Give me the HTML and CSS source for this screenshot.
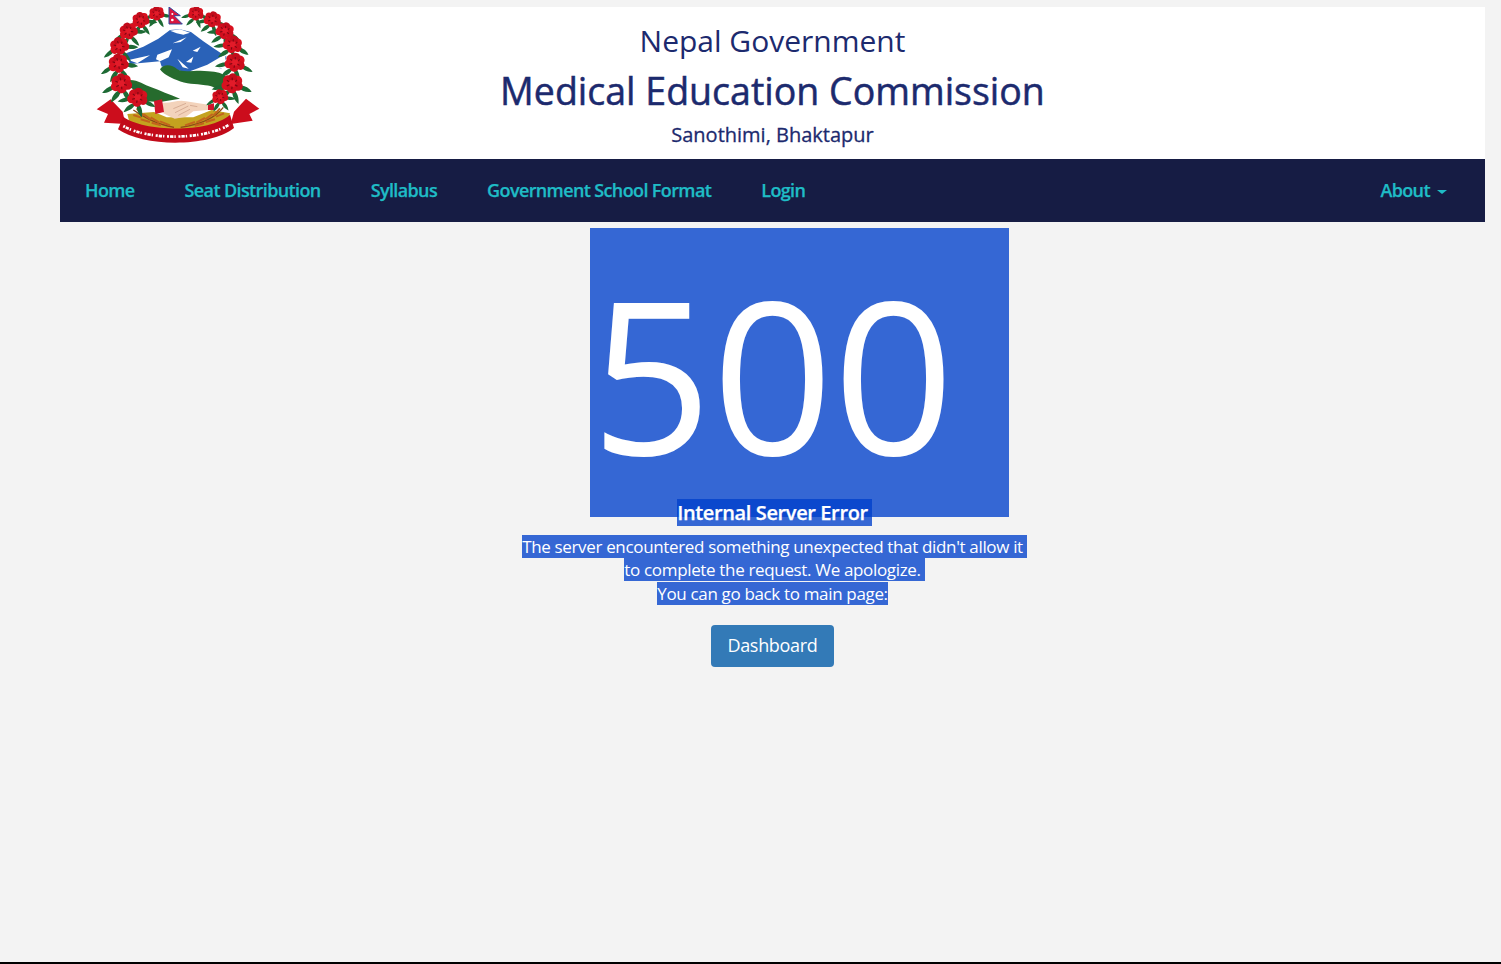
FILE: index.html
```html
<!DOCTYPE html>
<html lang="en">
<head>
<meta charset="utf-8">
<title>500 - Medical Education Commission</title>
<link rel="stylesheet" href="styles.css">
</head>
<body>
<div class="page">
  <header class="masthead">
    <svg class="emblem" viewBox="48 21 510 429" aria-label="Emblem of Nepal" role="img">
      <defs>
        <g id="bloom">
          <path d="M-8 20 C-26 26 -32 40 -36 54 C-20 48 -8 38 -4 24 Z M8 20 C20 30 24 44 24 60 C12 52 2 38 2 24 Z M-24 4 C-40 6 -52 14 -60 24 C-44 26 -30 20 -22 12 Z M24 4 C40 4 52 10 60 20 C44 24 30 20 22 12 Z" fill="#1d6a34"/>
          <circle cx="-14" cy="-8" r="15" fill="#d10f1e"/>
          <circle cx="14" cy="-9" r="15" fill="#d8111f"/>
          <circle cx="0" cy="-17" r="13" fill="#c20c1b"/>
          <circle cx="-18" cy="8" r="14" fill="#d8111f"/>
          <circle cx="18" cy="7" r="14" fill="#cc0e1d"/>
          <circle cx="0" cy="15" r="15" fill="#d10f1e"/>
          <circle cx="0" cy="0" r="11" fill="#e21b29"/>
          <path d="M-17 -8 l7 4 M13 -12 l-4 7 M-16 9 l8 -4 M16 7 l-8 -3 M0 18 l0 -8 M-2 -17 l1 8" stroke="#7c0712" stroke-width="3.5" fill="none"/>
        </g>
      </defs>
      <path d="M138 160 L190 140 L235 116 L270 90 L300 88 L333 96 L370 124 L405 148 L440 170 L425 205 L340 222 L250 200 L150 192 Z" fill="#2a62b8"/>
      <path d="M270 92 L300 88 L330 98 L310 104 L290 100 Z M232 164 L276 148 L266 172 L240 184 L228 178 Z M338 152 L362 140 L352 156 Z M278 130 L320 112 L302 126 Z M318 186 L340 170 L334 188 Z M292 176 L326 206 L308 202 Z M146 180 L210 166 L172 190 Z M330 214 L382 194 L437 162 L434 200 L400 214 L360 222 Z" fill="#fff"/>
      <path d="M150 192 L240 184 L246 204 L252 240 L170 240 Z" fill="#fff"/>
      <path d="M240 208 C250 192 274 192 292 208 C312 220 350 208 385 214 C410 216 428 218 438 232 L430 278 C410 268 398 256 376 256 C345 250 320 254 290 240 C268 232 250 222 240 208 Z" fill="#266b2d"/>
      <path d="M146 240 C172 238 192 254 214 262 C240 272 268 284 300 296 L240 306 L200 304 C184 294 168 280 158 268 Z" fill="#266b2d"/>
      <path d="M142 342 L222 336 L260 352 L340 352 L395 330 L450 340 L442 374 L345 400 L250 400 L150 374 Z" fill="#c4a21f"/>
      <path d="M160 330 C190 350 225 372 282 382 M430 322 C410 348 370 372 302 382" stroke="#8a4a17" stroke-width="4" fill="none"/>
      <path d="M170 325 l20 22 M190 342 l22 16 M212 352 l26 16 M240 364 l30 12 M160 345 l24 8 M182 358 l28 8 M215 368 l28 8 M420 325 l-20 22 M398 342 l-22 16 M375 354 l-26 14 M345 366 l-30 10 M432 340 l-24 10 M405 358 l-28 8 M372 370 l-28 7" stroke="#c2641c" stroke-width="6" fill="none"/>
      <path d="M248 308 C275 310 295 298 318 304 L385 314 L384 330 L340 334 L318 350 L284 356 L262 346 L250 340 Z" fill="#f3d3bb"/>
      <path d="M280 326 L318 310 M285 338 L325 318 M295 346 L330 328 M330 316 L352 320" stroke="#c99a82" stroke-width="2" fill="none"/>
      <path d="M222 303 L246 298 L252 336 L226 342 Z" fill="#d0142a"/>
      <path d="M384 314 L402 310 L402 330 L384 330 Z" fill="#d0142a"/>
      <path d="M92 298 L128 335 L136 372 L72 368 L84 342 L50 328 Z M498 296 L462 335 L452 372 L518 362 L508 342 L538 326 Z" fill="#cc0d1c"/>
      <path d="M130 350 C190 396 390 400 450 344 L462 384 C390 442 190 442 114 388 Z" fill="#c20b1a"/>
      <path class="motto" d="M130 378 C200 420 370 422 448 374"/>
      <use href="#bloom" transform="translate(230 40) rotate(-5) scale(.72)"/>
      <use href="#bloom" transform="translate(182 60) rotate(-10) scale(.8)"/>
      <use href="#bloom" transform="translate(145 93) rotate(-15) scale(.85)"/>
      <use href="#bloom" transform="translate(118 138) rotate(-15) scale(.9)"/>
      <use href="#bloom" transform="translate(115 190) rotate(-10) scale(.95)"/>
      <use href="#bloom" transform="translate(124 250) rotate(-5) scale(1)"/>
      <use href="#bloom" transform="translate(173 292) rotate(10) scale(.95)"/>
      <use href="#bloom" transform="translate(348 40) rotate(5) scale(.72)"/>
      <use href="#bloom" transform="translate(398 58) rotate(10) scale(.8)"/>
      <use href="#bloom" transform="translate(435 92) rotate(15) scale(.85)"/>
      <use href="#bloom" transform="translate(458 133) rotate(15) scale(.9)"/>
      <use href="#bloom" transform="translate(465 187) rotate(10) scale(.95)"/>
      <use href="#bloom" transform="translate(457 250) rotate(5) scale(1)"/>
      <use href="#bloom" transform="translate(420 290) rotate(-10) scale(.75)"/>
      <path d="M267 21 L301 47 L282 47 L307 72 L267 72 Z" fill="#d8163f" stroke="#2b4aa0" stroke-width="3"/>
      <circle cx="277" cy="42" r="3" fill="#fff"/>
      <circle cx="277" cy="60" r="4" fill="#fff"/>
    </svg>
    <div class="titles">
      <div class="title-gov">Nepal Government</div>
      <div class="title-org">Medical Education Commission</div>
      <div class="title-loc">Sanothimi, Bhaktapur</div>
    </div>
  </header>
  <nav class="navbar">
    <ul class="nav-list">
      <li><a class="nav-link" href="#">Home</a></li>
      <li><a class="nav-link" href="#">Seat Distribution</a></li>
      <li><a class="nav-link" href="#">Syllabus</a></li>
      <li><a class="nav-link" href="#">Government School Format</a></li>
      <li><a class="nav-link" href="#">Login</a></li>
    </ul>
    <a class="nav-link nav-about" href="#">About <span class="caret"></span></a>
  </nav>
  <main class="error">
    <h1 class="error-code"><span class="hl hl-code">500</span></h1>
    <h3 class="error-title"><span class="hl hl-title">Internal Server Error</span></h3>
    <p class="error-text"><span class="hl hl-trail">The server encountered something unexpected that didn't allow it</span><br><span class="hl hl-trail">to complete the request. We apologize.</span><br><span class="hl">You can go back to main page:</span></p>
    <a class="btn" href="#">Dashboard</a>
  </main>
</div>
</body>
</html>
```
FILE: styles.css
```css
* { box-sizing: border-box; }
html, body { height: 100%; }
body {
  margin: 0;
  background: #f3f3f3;
  font-family: "Open Sans", "Noto Sans", sans-serif;
  color: #fff;
  border-bottom: 2px solid #000;
  overflow: hidden;
}
.page {
  margin-left: 60px;
  width: 1425px;
  padding-top: 7px;
}
.masthead {
  display: grid;
  grid-template-columns: 1fr auto 1fr;
  height: 152px;
  background: #fff;
  padding-left: 36px;
}
.emblem { width: 170px; height: 143px; display: block; }
.motto { fill: none; stroke: #fff; stroke-width: 8; stroke-dasharray: 6 3 10 3 4 8; }
.titles {
  grid-column: 2;
  margin-left: -36px;
  text-align: center;
  color: #1c2a6e;
}
.title-gov { font-size: 30px; line-height: 40px; margin-top: 14px; }
.title-org {
  font-size: 37.5px;
  line-height: 50px;
  margin-top: 5px;
  -webkit-text-stroke: 0.5px #1c2a6e;
}
.title-loc {
  font-size: 20px;
  line-height: 28px;
  margin-top: 5px;
  -webkit-text-stroke: 0.3px #1c2a6e;
}
.navbar {
  display: flex;
  justify-content: space-between;
  height: 63px;
  background: #161c44;
}
.nav-list { display: flex; list-style: none; margin: 0; padding: 0; }
.nav-link {
  display: block;
  padding: 0 25px;
  font-size: 18px;
  font-weight: 600;
  line-height: 63px;
  color: #1fbcc6;
  text-decoration: none;
  letter-spacing: -0.62px;
  -webkit-text-stroke: 0.25px #1fbcc6;
}
.nav-about { padding-right: 38px; }
.caret {
  display: inline-block;
  width: 0;
  height: 0;
  margin-left: 3px;
  vertical-align: middle;
  border-top: 4px solid #1fbcc6;
  border-left: 5px solid transparent;
  border-right: 5px solid transparent;
}
.error { text-align: center; }
.error-code {
  margin: 34px 0 0;
  font-size: 212px;
  font-weight: 400;
  line-height: 233px;
}
.error-title {
  margin: 13px 0 0;
  font-size: 20px;
  font-weight: 600;
  line-height: 22px;
  letter-spacing: -0.38px;
  -webkit-text-stroke: 0.25px #fff;
}
.error-text {
  margin: 10.75px 0 0;
  font-size: 17px;
  line-height: 23.5px;
  letter-spacing: -0.34px;
}
.hl { background: rgba(0, 64, 203, 0.785); }
.hl-code { padding: 0 55px 0 1px; margin: 0 -55px 0 -1px; }
.hl-title { padding-right: 4px; margin-right: -4px; }
.hl-trail { padding-right: 4px; margin-right: -4px; }
.btn {
  display: inline-block;
  margin-top: 20px;
  padding: 0 16px;
  height: 42px;
  font-size: 18px;
  line-height: 41px;
  letter-spacing: -0.3px;
  color: #fff;
  text-decoration: none;
  background: #337ab7;
  border-radius: 4px;
}
```
